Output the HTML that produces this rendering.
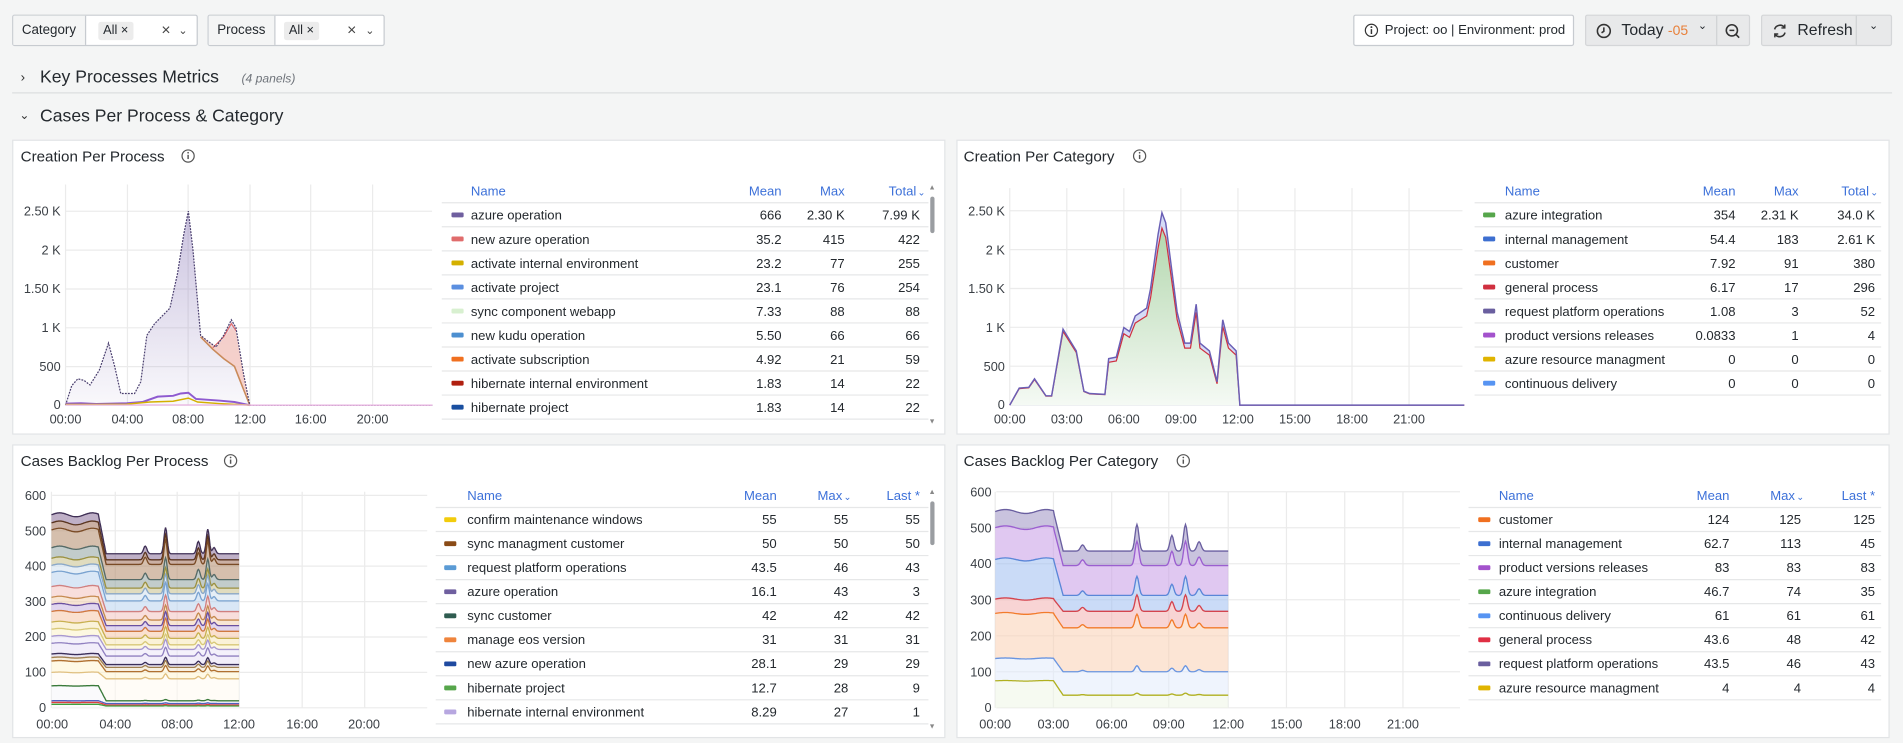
<!DOCTYPE html>
<html><head><meta charset="utf-8">
<style>
html,body{margin:0;padding:0;width:1903px;height:743px;overflow:hidden;background:#f4f5f5;}
#root{position:absolute;left:0;top:0;width:1568px;height:612px;transform-origin:0 0;transform:scale(1.21365,1.2141);font-family:"Liberation Sans",sans-serif;color:#24292e;}
.abs{position:absolute;box-sizing:border-box;}
.box{border:1px solid #c7cbd0;height:26px;top:12px;background:#fff;border-radius:2px;}
.lbl{position:absolute;top:0;left:0;height:24px;line-height:24px;padding:0 7px;font-size:11px;background:#f4f5f5;border-right:1px solid #c7cbd0;}
.chip{position:absolute;top:5px;height:15px;line-height:15px;padding:0 4px;font-size:10.5px;background:#ececec;border-radius:2px;}
.ic{position:absolute;top:0;height:24px;line-height:24px;font-size:11px;color:#444;}
svg text{font-family:"Liberation Sans",sans-serif;}
</style></head><body>
<div id="root">
<svg id="s" class="abs" style="left:0;top:0" width="1568" height="612" viewBox="0 0 1568 612">
<text x="17" y="67" font-size="11" fill="#333">›</text>
<text x="33" y="68" font-size="14.5" fill="#24292e">Key Processes Metrics</text>
<text x="199" y="68" font-size="10" font-style="italic" fill="#6e737a">(4 panels)</text>
<line x1="10" y1="76.5" x2="1559" y2="76.5" stroke="#dcdee0"/>
<text x="16" y="98" font-size="10" fill="#333">⌄</text>
<text x="33" y="100" font-size="14.5" fill="#24292e">Cases Per Process &amp; Category</text>
<rect x="10.5" y="115.5" width="768" height="242" fill="#fff" stroke="#e2e4e6"/>
<rect x="788.5" y="115.5" width="768" height="242" fill="#fff" stroke="#e2e4e6"/>
<rect x="10.5" y="366.5" width="768" height="241" fill="#fff" stroke="#e2e4e6"/>
<rect x="788.5" y="366.5" width="768" height="241" fill="#fff" stroke="#e2e4e6"/>
<g font-size="12.5" fill="#24292e">
<text x="17" y="133">Creation Per Process</text>
<text x="794" y="133">Creation Per Category</text>
<text x="17" y="384">Cases Backlog Per Process</text>
<text x="794" y="384">Cases Backlog Per Category</text>
</g>
<g fill="none" stroke="#555" stroke-width="1">
<circle cx="155" cy="128.5" r="5"/><circle cx="939" cy="128.5" r="5"/><circle cx="190" cy="379.5" r="5"/><circle cx="975" cy="379.5" r="5"/>
</g>
<g stroke="#555" stroke-width="1.2">
<line x1="155" y1="127.5" x2="155" y2="131"/><line x1="939" y1="127.5" x2="939" y2="131"/><line x1="190" y1="378.5" x2="190" y2="382"/><line x1="975" y1="378.5" x2="975" y2="382"/>
</g>
<g fill="#555"><circle cx="155" cy="125.8" r=".7"/><circle cx="939" cy="125.8" r=".7"/><circle cx="190" cy="376.8" r=".7"/><circle cx="975" cy="376.8" r=".7"/></g>
<g id="grids" stroke="#ebebeb" stroke-width="1"></g>
<g id="charts"></g>
<g font-size="10.5" fill="#3a3f45" text-anchor="end">
<text x="50" y="177.5">2.50 K</text><text x="50" y="209.5">2 K</text><text x="50" y="241.5">1.50 K</text><text x="50" y="273.5">1 K</text><text x="50" y="305.5">500</text><text x="50" y="337">0</text>
<text x="828" y="177.5">2.50 K</text><text x="828" y="209.5">2 K</text><text x="828" y="241.5">1.50 K</text><text x="828" y="273.5">1 K</text><text x="828" y="305.5">500</text><text x="828" y="337">0</text>
<text x="38" y="412">600</text><text x="38" y="441">500</text><text x="38" y="470">400</text><text x="38" y="499">300</text><text x="38" y="528">200</text><text x="38" y="557">100</text><text x="38" y="586.5">0</text>
<text x="817" y="409">600</text><text x="817" y="438.5">500</text><text x="817" y="468">400</text><text x="817" y="498">300</text><text x="817" y="527.5">200</text><text x="817" y="557">100</text><text x="817" y="586.5">0</text>
</g>
<g font-size="10.5" fill="#3a3f45" text-anchor="middle">
<text x="54" y="349">00:00</text><text x="105" y="349">04:00</text><text x="155" y="349">08:00</text><text x="206" y="349">12:00</text><text x="256" y="349">16:00</text><text x="307" y="349">20:00</text>
<text x="832" y="349">00:00</text><text x="879" y="349">03:00</text><text x="926" y="349">06:00</text><text x="973" y="349">09:00</text><text x="1020" y="349">12:00</text><text x="1067" y="349">15:00</text><text x="1114" y="349">18:00</text><text x="1161" y="349">21:00</text>
<text x="43" y="600">00:00</text><text x="95" y="600">04:00</text><text x="146" y="600">08:00</text><text x="197" y="600">12:00</text><text x="249" y="600">16:00</text><text x="300" y="600">20:00</text>
<text x="820" y="600">00:00</text><text x="868" y="600">03:00</text><text x="916" y="600">06:00</text><text x="963" y="600">09:00</text><text x="1012" y="600">12:00</text><text x="1060" y="600">15:00</text><text x="1108" y="600">18:00</text><text x="1156" y="600">21:00</text>
</g>
<g font-size="10.8" fill="#24292e">
<g fill="#3d71d9"><text x="388" y="161">Name</text><text x="644" y="161" text-anchor="end">Mean</text><text x="696" y="161" text-anchor="end">Max</text><text x="755" y="161" text-anchor="end">Total</text><text x="756" y="161" font-size="8">⌄</text></g>
<text x="388" y="181">azure operation</text><text x="644" y="181" text-anchor="end">666</text><text x="696" y="181" text-anchor="end">2.30 K</text><text x="758" y="181" text-anchor="end">7.99 K</text>
<text x="388" y="200.8">new azure operation</text><text x="644" y="200.8" text-anchor="end">35.2</text><text x="696" y="200.8" text-anchor="end">415</text><text x="758" y="200.8" text-anchor="end">422</text>
<text x="388" y="220.6">activate internal environment</text><text x="644" y="220.6" text-anchor="end">23.2</text><text x="696" y="220.6" text-anchor="end">77</text><text x="758" y="220.6" text-anchor="end">255</text>
<text x="388" y="240.4">activate project</text><text x="644" y="240.4" text-anchor="end">23.1</text><text x="696" y="240.4" text-anchor="end">76</text><text x="758" y="240.4" text-anchor="end">254</text>
<text x="388" y="260.2">sync component webapp</text><text x="644" y="260.2" text-anchor="end">7.33</text><text x="696" y="260.2" text-anchor="end">88</text><text x="758" y="260.2" text-anchor="end">88</text>
<text x="388" y="280">new kudu operation</text><text x="644" y="280" text-anchor="end">5.50</text><text x="696" y="280" text-anchor="end">66</text><text x="758" y="280" text-anchor="end">66</text>
<text x="388" y="299.8">activate subscription</text><text x="644" y="299.8" text-anchor="end">4.92</text><text x="696" y="299.8" text-anchor="end">21</text><text x="758" y="299.8" text-anchor="end">59</text>
<text x="388" y="319.6">hibernate internal environment</text><text x="644" y="319.6" text-anchor="end">1.83</text><text x="696" y="319.6" text-anchor="end">14</text><text x="758" y="319.6" text-anchor="end">22</text>
<text x="388" y="339.4">hibernate project</text><text x="644" y="339.4" text-anchor="end">1.83</text><text x="696" y="339.4" text-anchor="end">14</text><text x="758" y="339.4" text-anchor="end">22</text>
</g>
<g font-size="10.8" fill="#24292e">
<g fill="#3d71d9"><text x="1240" y="161">Name</text><text x="1430" y="161" text-anchor="end">Mean</text><text x="1482" y="161" text-anchor="end">Max</text><text x="1540" y="161" text-anchor="end">Total</text><text x="1541" y="161" font-size="8">⌄</text></g>
<text x="1240" y="181">azure integration</text><text x="1430" y="181" text-anchor="end">354</text><text x="1482" y="181" text-anchor="end">2.31 K</text><text x="1545" y="181" text-anchor="end">34.0 K</text>
<text x="1240" y="200.8">internal management</text><text x="1430" y="200.8" text-anchor="end">54.4</text><text x="1482" y="200.8" text-anchor="end">183</text><text x="1545" y="200.8" text-anchor="end">2.61 K</text>
<text x="1240" y="220.6">customer</text><text x="1430" y="220.6" text-anchor="end">7.92</text><text x="1482" y="220.6" text-anchor="end">91</text><text x="1545" y="220.6" text-anchor="end">380</text>
<text x="1240" y="240.4">general process</text><text x="1430" y="240.4" text-anchor="end">6.17</text><text x="1482" y="240.4" text-anchor="end">17</text><text x="1545" y="240.4" text-anchor="end">296</text>
<text x="1240" y="260.2">request platform operations</text><text x="1430" y="260.2" text-anchor="end">1.08</text><text x="1482" y="260.2" text-anchor="end">3</text><text x="1545" y="260.2" text-anchor="end">52</text>
<text x="1240" y="280">product versions releases</text><text x="1430" y="280" text-anchor="end">0.0833</text><text x="1482" y="280" text-anchor="end">1</text><text x="1545" y="280" text-anchor="end">4</text>
<text x="1240" y="299.8">azure resource managment</text><text x="1430" y="299.8" text-anchor="end">0</text><text x="1482" y="299.8" text-anchor="end">0</text><text x="1545" y="299.8" text-anchor="end">0</text>
<text x="1240" y="319.6">continuous delivery</text><text x="1430" y="319.6" text-anchor="end">0</text><text x="1482" y="319.6" text-anchor="end">0</text><text x="1545" y="319.6" text-anchor="end">0</text>
</g>
<g font-size="10.8" fill="#24292e">
<g fill="#3d71d9"><text x="385" y="412">Name</text><text x="640" y="412" text-anchor="end">Mean</text><text x="694" y="412" text-anchor="end">Max</text><text x="695" y="412" font-size="8">⌄</text><text x="758" y="412" text-anchor="end">Last *</text></g>
<text x="385" y="431.6">confirm maintenance windows</text><text x="640" y="431.6" text-anchor="end">55</text><text x="699" y="431.6" text-anchor="end">55</text><text x="758" y="431.6" text-anchor="end">55</text>
<text x="385" y="451.4">sync managment customer</text><text x="640" y="451.4" text-anchor="end">50</text><text x="699" y="451.4" text-anchor="end">50</text><text x="758" y="451.4" text-anchor="end">50</text>
<text x="385" y="471.2">request platform operations</text><text x="640" y="471.2" text-anchor="end">43.5</text><text x="699" y="471.2" text-anchor="end">46</text><text x="758" y="471.2" text-anchor="end">43</text>
<text x="385" y="491">azure operation</text><text x="640" y="491" text-anchor="end">16.1</text><text x="699" y="491" text-anchor="end">43</text><text x="758" y="491" text-anchor="end">3</text>
<text x="385" y="510.8">sync customer</text><text x="640" y="510.8" text-anchor="end">42</text><text x="699" y="510.8" text-anchor="end">42</text><text x="758" y="510.8" text-anchor="end">42</text>
<text x="385" y="530.6">manage eos version</text><text x="640" y="530.6" text-anchor="end">31</text><text x="699" y="530.6" text-anchor="end">31</text><text x="758" y="530.6" text-anchor="end">31</text>
<text x="385" y="550.4">new azure operation</text><text x="640" y="550.4" text-anchor="end">28.1</text><text x="699" y="550.4" text-anchor="end">29</text><text x="758" y="550.4" text-anchor="end">29</text>
<text x="385" y="570.2">hibernate project</text><text x="640" y="570.2" text-anchor="end">12.7</text><text x="699" y="570.2" text-anchor="end">28</text><text x="758" y="570.2" text-anchor="end">9</text>
<text x="385" y="590">hibernate internal environment</text><text x="640" y="590" text-anchor="end">8.29</text><text x="699" y="590" text-anchor="end">27</text><text x="758" y="590" text-anchor="end">1</text>
</g>
<g font-size="10.8" fill="#24292e">
<g fill="#3d71d9"><text x="1235" y="412">Name</text><text x="1425" y="412" text-anchor="end">Mean</text><text x="1479" y="412" text-anchor="end">Max</text><text x="1480" y="412" font-size="8">⌄</text><text x="1545" y="412" text-anchor="end">Last *</text></g>
<text x="1235" y="431.6">customer</text><text x="1425" y="431.6" text-anchor="end">124</text><text x="1484" y="431.6" text-anchor="end">125</text><text x="1545" y="431.6" text-anchor="end">125</text>
<text x="1235" y="451.4">internal management</text><text x="1425" y="451.4" text-anchor="end">62.7</text><text x="1484" y="451.4" text-anchor="end">113</text><text x="1545" y="451.4" text-anchor="end">45</text>
<text x="1235" y="471.2">product versions releases</text><text x="1425" y="471.2" text-anchor="end">83</text><text x="1484" y="471.2" text-anchor="end">83</text><text x="1545" y="471.2" text-anchor="end">83</text>
<text x="1235" y="491">azure integration</text><text x="1425" y="491" text-anchor="end">46.7</text><text x="1484" y="491" text-anchor="end">74</text><text x="1545" y="491" text-anchor="end">35</text>
<text x="1235" y="510.8">continuous delivery</text><text x="1425" y="510.8" text-anchor="end">61</text><text x="1484" y="510.8" text-anchor="end">61</text><text x="1545" y="510.8" text-anchor="end">61</text>
<text x="1235" y="530.6">general process</text><text x="1425" y="530.6" text-anchor="end">43.6</text><text x="1484" y="530.6" text-anchor="end">48</text><text x="1545" y="530.6" text-anchor="end">42</text>
<text x="1235" y="550.4">request platform operations</text><text x="1425" y="550.4" text-anchor="end">43.5</text><text x="1484" y="550.4" text-anchor="end">46</text><text x="1545" y="550.4" text-anchor="end">43</text>
<text x="1235" y="570.2">azure resource managment</text><text x="1425" y="570.2" text-anchor="end">4</text><text x="1484" y="570.2" text-anchor="end">4</text><text x="1545" y="570.2" text-anchor="end">4</text>
</g>
<g id="legendlines" stroke="#e6e7e8"></g>
<g id="swatches"></g>
<rect x="766.5" y="162" width="3.5" height="30" rx="1.7" fill="#9a9da1"/>
<text x="768" y="156" font-size="6" fill="#888" text-anchor="middle">▲</text>
<text x="768" y="349" font-size="6" fill="#888" text-anchor="middle">▼</text>
<rect x="766.5" y="413" width="3.5" height="36" rx="1.7" fill="#9a9da1"/>
<text x="768" y="407" font-size="6" fill="#888" text-anchor="middle">▲</text>
<text x="768" y="600" font-size="6" fill="#888" text-anchor="middle">▼</text>
</svg>

<div class="abs box" style="left:10px;width:153px;">
 <div class="lbl">Category</div>
 <div class="chip" style="left:70px">All ×</div>
 <div class="ic" style="left:122px;font-size:13px">×</div>
 <div class="ic" style="left:136px;font-size:9px">⌄</div>
</div>
<div class="abs box" style="left:171px;width:146px;">
 <div class="lbl">Process</div>
 <div class="chip" style="left:62px">All ×</div>
 <div class="ic" style="left:114px;font-size:13px">×</div>
 <div class="ic" style="left:129px;font-size:9px">⌄</div>
</div>
<div class="abs box" style="left:1115px;width:182px;font-size:10.8px;line-height:24px;">
 <svg class="abs" style="left:8px;top:6px" width="12" height="12" viewBox="0 0 12 12"><circle cx="6" cy="6" r="5" fill="none" stroke="#333"/><line x1="6" y1="5" x2="6" y2="9" stroke="#333" stroke-width="1.2"/><circle cx="6" cy="3.3" r=".8" fill="#333"/></svg>
 <span style="position:absolute;left:25px;white-space:nowrap">Project: oo | Environment: prod</span>
</div>
<div class="abs" style="left:1306px;top:12px;width:136px;height:26px;background:#e8e9ea;border:1px solid #d4d6d8;border-radius:2px;">
 <svg class="abs" style="left:8px;top:6px" width="13" height="13" viewBox="0 0 13 13"><circle cx="6.5" cy="6.5" r="5.3" fill="none" stroke="#333" stroke-width="1.3"/><path d="M6.5 3.5V6.8L4.6 8" fill="none" stroke="#333" stroke-width="1.3"/></svg>
 <span style="position:absolute;left:29px;top:4px;font-size:13px">Today <span style="color:#e8803a;font-size:11.5px">-05</span></span>
 <span style="position:absolute;left:92px;top:3px;font-size:9px">⌄</span>
 <div style="position:absolute;left:107px;top:0;width:1px;height:24px;background:#d0d2d4"></div>
 <svg class="abs" style="left:114px;top:6px" width="13" height="13" viewBox="0 0 13 13"><circle cx="6" cy="6" r="4.6" fill="none" stroke="#333" stroke-width="1.3"/><line x1="4" y1="6" x2="8" y2="6" stroke="#333" stroke-width="1.3"/><line x1="9.3" y1="9.3" x2="12" y2="12" stroke="#333" stroke-width="1.3"/></svg>
</div>
<div class="abs" style="left:1451px;top:12px;width:108px;height:26px;background:#e8e9ea;border:1px solid #d4d6d8;border-radius:2px;">
 <svg class="abs" style="left:8px;top:6px" width="13" height="13" viewBox="0 0 13 13"><path d="M2.2 5.2A4.6 4.6 0 0 1 10.3 3.6M10.8 7.8A4.6 4.6 0 0 1 2.7 9.4" fill="none" stroke="#333" stroke-width="1.3"/><path d="M10.6 1.2V4H7.8M2.4 11.8V9H5.2" fill="none" stroke="#333" stroke-width="1.2"/></svg>
 <span style="position:absolute;left:29px;top:4px;font-size:13px">Refresh</span>
 <div style="position:absolute;left:77px;top:0;width:1px;height:24px;background:#d0d2d4"></div>
 <span style="position:absolute;left:88px;top:3px;font-size:9px">⌄</span>
</div>
</div>
<script>
var NS="http://www.w3.org/2000/svg";
function el(parent,tag,attrs){var e=document.createElementNS(NS,tag);for(var k in attrs)e.setAttribute(k,attrs[k]);document.getElementById(parent).appendChild(e);return e;}
function grid(xs,ys,x0,x1,y0,y1){xs.forEach(function(x){el('grids','line',{x1:x,x2:x,y1:y0,y2:y1});});ys.forEach(function(y){el('grids','line',{x1:x0,x2:x1,y1:y,y2:y});});}
grid([54,105,155,206,256,307],[174,206,238,270,302,333.7],54,356,152,334);
grid([832,879,926,973,1020,1067,1114,1161],[173.6,205.6,237.6,269.6,301.6,333.7],832,1205,155,334);
grid([42.4,95,146,197,249,300.5],[408,437.2,466.3,495.5,524.7,553.8,583],43,352,405,583);
grid([820,868,916,963,1012,1060,1108,1156],[405,434.7,464.3,494,523.7,553.3,583],821,1203,405,583);
function rows(x1,x2,y0,n,cols,sx){for(var i=0;i<=n;i++){var y=y0+19.8*i;el('legendlines','line',{x1:x1,x2:x2,y1:y,y2:y});}
 cols.forEach(function(c,i){el('swatches','rect',{x:sx,y:y0+19.8*i+8,width:10,height:4,rx:1,fill:c});});}
rows(364,765,167,9,['#6f5f9f','#e06c6c','#d4b000','#5b8fe0','#d8f0d0','#4d8fd0','#f07020','#b02010','#1a4fa0'],372);
rows(1215,1550,167,8,['#56a64b','#3d6fd0','#f07020','#d03040','#6a5f9f','#a352cc','#e0b400','#5794f2'],1222);
rows(359,765,418,9,['#f2cc0c','#8a4b16','#5b9bd5','#6f5f9f','#2f5c50','#ef843c','#1f4aa0','#56a64b','#b7a7e0'],366);
rows(1210,1550,418,8,['#f07020','#3d6fd0','#a352cc','#56a64b','#5794f2','#e02f44','#6a5f9f','#e0b400'],1218);
var defs=el('charts','defs',{});
function grad(id,c,o1,o2){var g=document.createElementNS(NS,'linearGradient');g.setAttribute('id',id);g.setAttribute('x1',0);g.setAttribute('y1',0);g.setAttribute('x2',0);g.setAttribute('y2',1);
 [[0,o1],[1,o2]].forEach(function(s){var st=document.createElementNS(NS,'stop');st.setAttribute('offset',s[0]);st.setAttribute('stop-color',c);st.setAttribute('stop-opacity',s[1]);g.appendChild(st);});defs.appendChild(g);}
grad('gp','#8a78b8',0.45,0.05);grad('gg','#56a64b',0.45,0.06);
function path(pts,X,Y){return pts.map(function(p,i){return (i?'L':'M')+X(p[0]).toFixed(1)+' '+Y(p[1]).toFixed(1);}).join('');}
(function(){var X=function(h){return 54+h*12.65},Y=function(v){return 333.7-v*0.0639};
var top=[[0,0],[0.4,250],[0.8,340],[1.2,320],[1.6,260],[2.2,450],[2.8,800],[3.2,500],[3.6,150],[4.5,150],[4.9,300],[5.3,900],[5.8,1050],[6.8,1250],[7.3,1700],[7.7,2200],[8,2500],[8.3,2000],[8.8,900],[9.3,820],[9.8,750],[10.3,900],[10.8,1100],[11.1,1000],[11.6,400],[12,0],[23.9,0]];
el('charts','path',{d:path(top,X,Y)+'Z',fill:'url(#gp)'});
var pink=[[8.8,900],[9.3,820],[9.8,750],[10.3,860],[10.8,1000],[11.1,950],[11.6,400],[12,0],[11.6,200],[11,500],[10.3,600],[9.6,720],[8.8,880]];
el('charts','path',{d:path(pink,X,Y)+'Z',fill:'#f6c9c0',opacity:0.8});
el('charts','path',{d:path([[8.8,880],[9.6,720],[10.3,600],[11,500],[11.6,200],[12,0]],X,Y),fill:'none',stroke:'#c98a5a','stroke-width':1.3});
el('charts','path',{d:path([[9.6,740],[10.3,880],[10.8,1050],[11.1,960]],X,Y),fill:'none',stroke:'#e06c6c','stroke-width':1});
el('charts','path',{d:path(top,X,Y),fill:'none',stroke:'#4a3f6e','stroke-width':1,'stroke-dasharray':'1.5 1'});
el('charts','path',{d:path([[0,20],[1,25],[2,15],[3,20],[4,25],[5,40],[6,110],[7,120],[7.5,150],[8,160],[8.5,80],[10,60],[11,40],[12,0]],X,Y),fill:'none',stroke:'#8e5ad0','stroke-width':1.6});
el('charts','path',{d:path([[0,8],[2,10],[4,12],[5.5,40],[7,50],[8,90],[8.6,40],[10,20],[12,0]],X,Y),fill:'none',stroke:'#d4b000','stroke-width':1.2});
el('charts','path',{d:path([[0,2],[12,2],[12,0],[23.9,0]],X,Y),fill:'none',stroke:'#e8b0e0','stroke-width':1});
})();
(function(){var X=function(h){return 832+h*15.67},Y=function(v){return 333.7-v*0.0639};
var d=[[0,0],[.5,220],[1,230],[1.3,340],[1.9,120],[2.2,120],[2.8,980],[3.5,700],[3.9,180],[4.2,150],[5,140],[5.2,600],[5.6,620],[6,1000],[6.3,950],[6.6,1150],[7.2,1250],[7.4,1500],[7.8,2200],[8,2480],[8.2,2350],[8.8,1200],[9.2,800],[9.5,800],[9.8,1300],[10,800],[10.5,700],[10.9,300],[11.2,1100],[11.5,800],[11.9,700],[12.1,0],[23.9,0]];
var g=d.map(function(p){return [p[0],p[1]*(p[0]>5&&p[0]<12?0.92:0.97)];});
el('charts','path',{d:path(d,X,Y)+'L'+X(0)+' '+Y(0)+'Z',fill:'#c3cdf3',opacity:0.7});
el('charts','path',{d:path(g,X,Y)+'L'+X(0)+' '+Y(0)+'Z',fill:'#ffffff'});
el('charts','path',{d:path(g,X,Y)+'L'+X(0)+' '+Y(0)+'Z',fill:'url(#gg)'});
el('charts','path',{d:path(g,X,Y),fill:'none',stroke:'#d03040','stroke-width':1});
el('charts','path',{d:path(d,X,Y),fill:'none',stroke:'#6a5fb5','stroke-width':1.2});
})();
function bump(h,b){var s=0;b.forEach(function(q){s+=q[1]*Math.exp(-Math.pow((h-q[0])/q[2],2));});return s;}
function stacked(X,Y,bands,bumps){var hs=[];for(var h=0;h<=12.001;h+=0.05)hs.push(Math.round(h*100)/100);
 function val(h,L,R){var base;if(h<=3)base=L+(Math.sin(h*3)*0.01*L);else if(h<3.5)base=L+(R-L)*(h-3)/0.5;else base=R;return base*(1+(h>3.5?bump(h,bumps):0));}
 for(var i=0;i<bands.length;i++){var b=bands[i],nx=bands[i+1];
  var up=hs.map(function(h){return [h,val(h,b[0],b[1])];});
  var lo=nx?hs.slice().reverse().map(function(h){return [h,val(h,nx[0],nx[1])];}):[[12,0],[0,0]];
  el('charts','path',{d:path(up.concat(lo),X,Y)+'Z',fill:b[2],opacity:0.55});
 }
 for(var i=0;i<bands.length;i++){var b=bands[i];var up=hs.map(function(h){return [h,val(h,b[0],b[1])];});
  el('charts','path',{d:path(up,X,Y),fill:'none',stroke:b[3],'stroke-width':1.1});}
}
stacked(function(h){return 42.4+h*12.88},function(v){return 583-v*0.2917},[
[545,435,'#8a6f99','#3f2f55'],[522,418,'#a0705a','#5a3520'],[502,405,'#b38a6a','#7a4b26'],[452,362,'#8fa3a0','#556a66'],[422,338,'#c6c08a','#9a9040'],[402,322,'#cfe0ef','#8aa8c8'],[382,302,'#b9d3ee','#7aa3d0'],[342,272,'#f3c2c0','#d08080'],[312,248,'#f2d0b0','#c58a50'],[292,232,'#c9b5e2','#6a4fa0'],[272,216,'#f6c7a8','#d07840'],[242,196,'#f5e8b8','#c8b050'],[222,178,'#fbf2c8','#d8c878'],[202,165,'#ebe6f8','#a898d0'],[182,146,'#e8e0f5','#9080c0'],[152,122,'#d8d0e8','#3a2f5a'],[142,114,'#f0e4c8','#a08050'],[132,102,'#fff4d0','#b07030'],[100,82,'#fffaf0','#e0c080'],[62,20,'#f6f6fa','#3a7a3a'],[20,12,'#fafafa','#5060c0'],[15,8,'#fafafa','#e04040'],[10,5,'#fafafa','#40a040']
],[[6,0.05,0.15],[7.3,0.17,0.14],[9.4,0.08,0.15],[10,0.16,0.14],[10.4,0.04,0.15]]);
stacked(function(h){return 820+h*16},function(v){return 583-v*0.2967},[
[545,435,'#9c92c2','#6a5fa0'],[500,395,'#c79ae5','#9b5fd0'],[412,312,'#9fbdf0','#5a86d8'],[302,268,'#f3b0b0','#d4444e'],[262,222,'#fad0b2','#f27b2b'],[137,100,'#e2ebfb','#6a95e0'],[75,35,'#eef6e6','#b0b020']
],[[4.5,0.04,0.15],[7.3,0.17,0.14],[9.1,0.1,0.14],[9.8,0.17,0.14],[10.5,0.06,0.15]]);
</script>
</body></html>
